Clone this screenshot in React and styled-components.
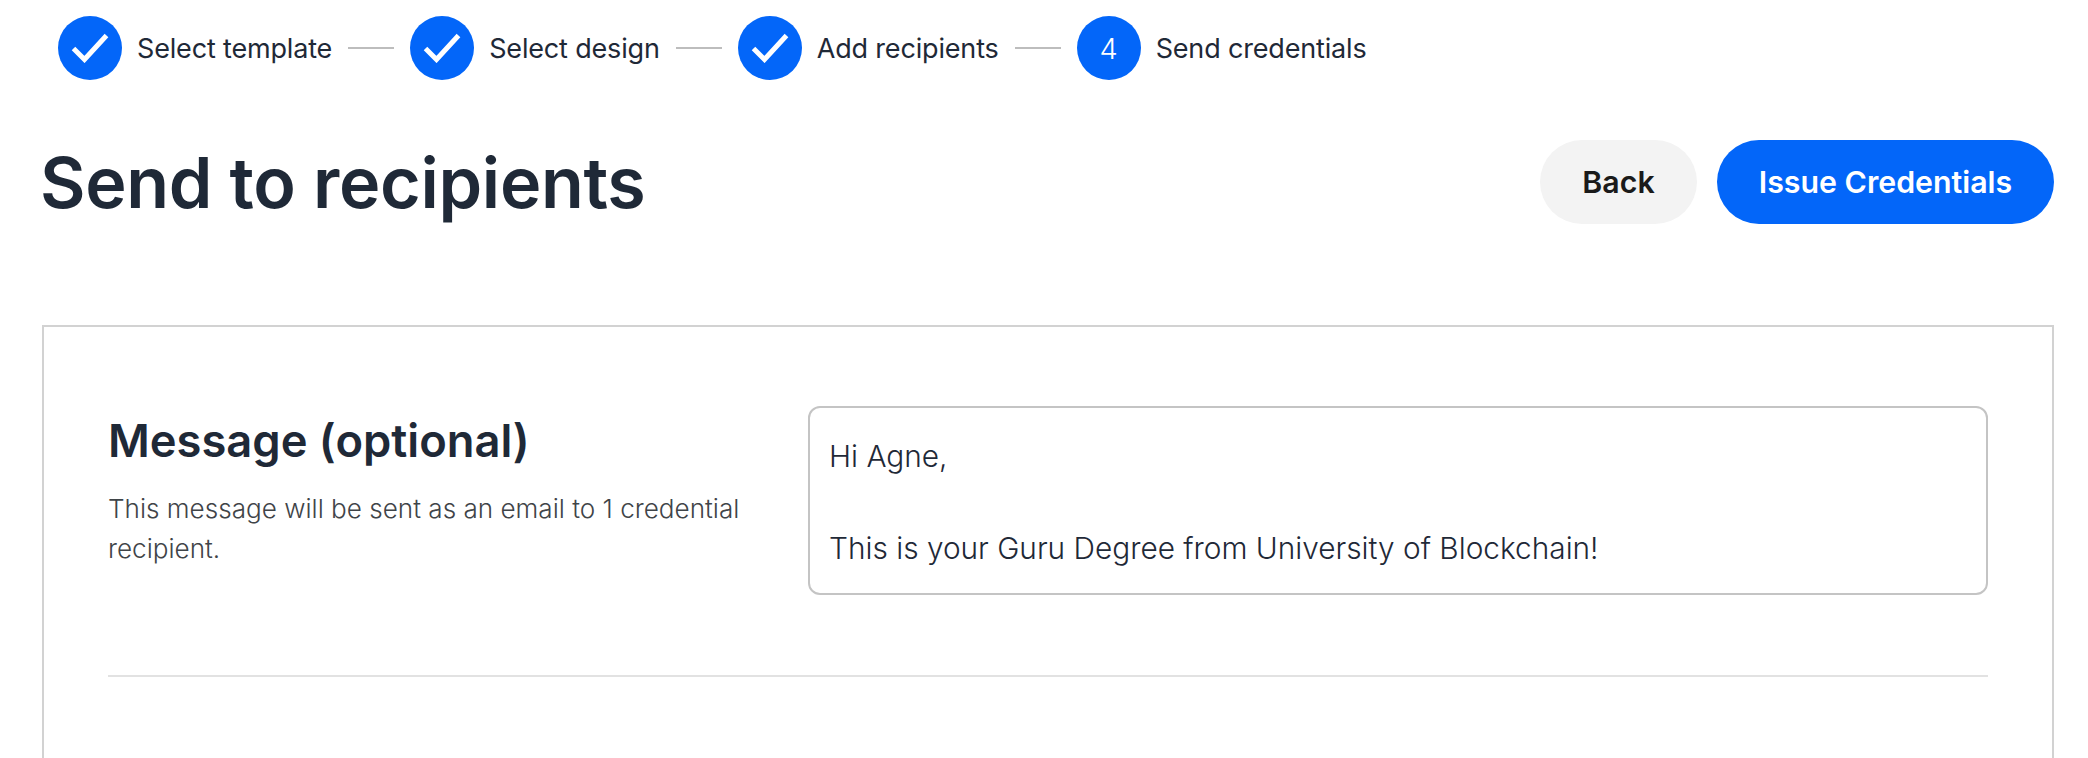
import React from "react";
import styled, { createGlobalStyle } from "styled-components";

const Global = createGlobalStyle`
  html, body { margin: 0; padding: 0; background: #fff; overflow: hidden; height: 758px; }
  body { font-family: "Inter", "Liberation Sans", sans-serif; color: #1f2937; }
  * { box-sizing: border-box; }
`;

const Page = styled.div`
  width: 2088px;
  height: 758px;
  overflow: hidden;
`;

const Stepper = styled.ol`
  display: flex;
  align-items: center;
  list-style: none;
  margin: 0;
  padding: 16px 0 0 58px;
`;

const Step = styled.li`
  display: flex;
  align-items: center;
  gap: 15px;
`;

const Circle = styled.span`
  width: 64px;
  height: 64px;
  border-radius: 50%;
  background: #0366f9;
  color: #fff;
  display: flex;
  align-items: center;
  justify-content: center;
  font-size: 29px;
  font-weight: 300;
`;

const StepLabel = styled.span`
  padding-top: 2px;
  font-size: 27px;
  line-height: 34px;
  letter-spacing: -0.17px;
  font-weight: 400;
  color: #1f2937;
  white-space: nowrap;
`;

const Connector = styled.span`
  width: 46px;
  height: 2px;
  margin: 0 16px;
  background: #bdbdbd;
`;

const Header = styled.header`
  display: flex;
  align-items: center;
  justify-content: space-between;
  padding: 60px 34px 0 42px;
`;

const Title = styled.h1`
  margin: 2px 0 0 -2px;
  font-size: 70px;
  line-height: 82px;
  letter-spacing: -0.3px;
  font-weight: 600;
  color: #1f2937;
`;

const Actions = styled.div`
  display: flex;
  gap: 20px;
`;

const Button = styled.button`
  height: 84px;
  width: ${(p) => p.$w}px;
  border: 0;
  border-radius: 42px;
  padding: 0;
  font-family: inherit;
  font-size: 30.3px;
  font-weight: 600;
  background: ${(p) => (p.$primary ? "#0366f9" : "#f3f3f3")};
  color: ${(p) => (p.$primary ? "#fff" : "#1a1a1a")};
`;

const Card = styled.section`
  margin: 101px 34px 0 42px;
  border: 2px solid #d2d2d2;
  padding: 79px 64px 0;
  height: 600px;
`;

const MessageRow = styled.div`
  display: grid;
  grid-template-columns: 700px 1fr;
`;

const Intro = styled.div`
  padding: 5px 30px 0 0;
`;

const SectionTitle = styled.h2`
  margin: 0 0 18px;
  font-size: 45.3px;
  line-height: 60px;
  font-weight: 600;
  color: #1f2937;
`;

const Hint = styled.p`
  margin: 0;
  font-size: 26.1px;
  line-height: 40px;
  font-weight: 300;
  color: #3f4448;
`;

const MessageBox = styled.textarea`
  display: block;
  width: 100%;
  height: 189px;
  padding: 25px 19px;
  border: 2px solid #c4c4c4;
  border-radius: 12px;
  resize: none;
  overflow: hidden;
  font-family: inherit;
  font-size: 29.8px;
  line-height: 46px;
  font-weight: 300;
  color: #1f2937;
  background: #fff;
  outline: none;
`;

const Divider = styled.hr`
  margin: 80px 0 0;
  border: 0;
  height: 2px;
  background: #e2e2e2;
`;

const Check = () => (
  <svg width="38" height="30" viewBox="0 0 38 30" fill="none" aria-hidden="true">
    <path d="M2.5 15.5 L13.5 26.5 L35.5 2.5" stroke="#fff" strokeWidth="5" />
  </svg>
);

const steps = [
  { label: "Select template", done: true },
  { label: "Select design", done: true },
  { label: "Add recipients", done: true },
  { label: "Send credentials", done: false, n: 4 },
];

export default function App() {
  return (
    <Page>
      <Global />
      <Stepper>
        {steps.map((s, i) => (
          <React.Fragment key={s.label}>
            <Step>
              <Circle>{s.done ? <Check /> : s.n}</Circle>
              <StepLabel>{s.label}</StepLabel>
            </Step>
            {i < steps.length - 1 && <Connector />}
          </React.Fragment>
        ))}
      </Stepper>
      <Header>
        <Title>Send to recipients</Title>
        <Actions>
          <Button $w={157}>Back</Button>
          <Button $primary $w={337}>Issue Credentials</Button>
        </Actions>
      </Header>
      <Card>
        <MessageRow>
          <Intro>
            <SectionTitle>Message (optional)</SectionTitle>
            <Hint>This message will be sent as an email to 1 credential recipient.</Hint>
          </Intro>
          <MessageBox readOnly defaultValue={"Hi Agne,\n\nThis is your Guru Degree from University of Blockchain!"} />
        </MessageRow>
        <Divider />
      </Card>
    </Page>
  );
}
